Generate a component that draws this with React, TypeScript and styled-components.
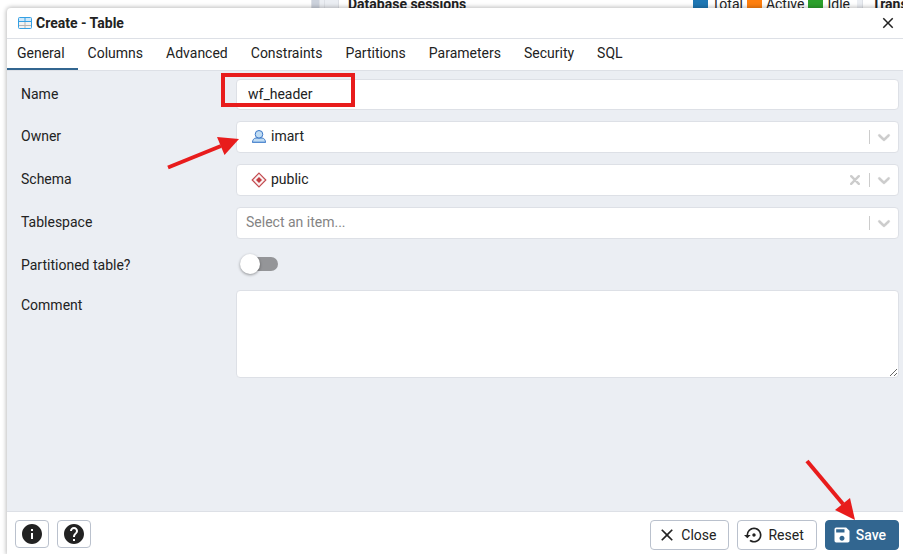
import React from 'react';
import styled, { createGlobalStyle } from 'styled-components';
import { MdClose, MdInfo, MdHelp, MdSettingsBackupRestore, MdSave } from 'react-icons/md';

const GlobalStyle = createGlobalStyle`
  *, *::before, *::after { box-sizing: border-box; }
  body {
    margin: 0;
    background: #fff;
    color: #222;
    font: 14px/20px Roboto, "Liberation Sans", sans-serif;
  }
  button, input, select, textarea { font: inherit; color: inherit; margin: 0; }
`;

const Page = styled.div`
  display: flex;
  flex-direction: column;
  min-height: 100vh;
  overflow: hidden;
`;

const Dashboard = styled.div`
  display: grid;
  grid-template-columns: 312px 8px 5px 14px 1fr 6px 40px;
  height: 8px;
`;

const Gutter = styled.div<{ $tone: string }>`
  background: ${(p) => p.$tone};
  border-right: 1px solid #dde0e6;
`;

const ChartTitle = styled.div`
  display: flex;
  align-items: flex-start;
  justify-content: space-between;
  height: 8px;
  padding-left: 9px;
  padding-right: 7px;
  line-height: 8px;
  font-weight: 700;
`;

const Legend = styled.div`
  display: flex;
  gap: 4px;
  font-weight: 400;
`;

const LegendItem = styled.span<{ $color: string }>`
  display: flex;
  gap: 4px;
  &::before {
    content: '';
    width: 15px;
    height: 8px;
    background: ${(p) => p.$color};
  }
`;

const Dialog = styled.section`
  flex: 1;
  display: flex;
  flex-direction: column;
  margin-left: 7px;
  background: #fff;
  border-top-left-radius: 4px;
  box-shadow: 0 0 4px 1px rgba(0, 0, 0, 0.26);
  position: relative;
`;

const TitleBar = styled.header`
  display: flex;
  align-items: center;
  height: 31px;
  padding: 0 6px 0 11px;
  gap: 4px;
  border-bottom: 1px solid #dde0e6;
`;

const Title = styled.h1`
  flex: 1;
  margin: 0;
  font-size: 14px;
  line-height: 20px;
  font-weight: 700;
`;

const CloseButton = styled.button`
  display: flex;
  padding: 0;
  border: 0;
  background: none;
  font-size: 18px;
`;

const TabList = styled.nav`
  display: flex;
  height: 32px;
  border-bottom: 1px solid #dde0e6;
`;

const Tab = styled.button<{ $active?: boolean }>`
  padding: 0 13px 2px 10px;
  border: 0;
  border-bottom: 2px solid ${(p) => (p.$active ? '#326690' : 'transparent')};
  background: none;
`;

const Form = styled.form`
  flex: 1;
  display: flex;
  flex-direction: column;
  gap: 11px;
  padding: 8px 4px 8px 8px;
  background: #ebeef3;
`;

const Row = styled.div`
  display: grid;
  grid-template-columns: 1fr 3fr;
`;

const Label = styled.label`
  padding: 5px 6px;
`;

const Control = styled.div`
  position: relative;
`;

const TextInput = styled.input`
  display: block;
  width: 100%;
  height: 31px;
  padding: 0 11px 2px;
  border: 1px solid #dde0e6;
  border-radius: 4px;
  background: #fff;
  outline: 0;
`;

const SelectBox = styled.div<{ $icon?: boolean }>`
  display: flex;
  align-items: center;
  height: 32px;
  padding-left: ${(p) => (p.$icon ? 14 : 9)}px;
  border: 1px solid #dde0e6;
  border-radius: 4px;
  background: #fff;
`;

const Select = styled.select<{ $empty?: boolean }>`
  flex: 1;
  height: 28px;
  padding: 0 0 2px ${(p) => (p.$empty ? 0 : 4)}px;
  border: 0;
  appearance: none;
  background: none;
  color: ${(p) => (p.$empty ? '#848484' : '#222')};
  outline: 0;
`;

const ClearButton = styled.button`
  display: flex;
  margin-right: 9px;
  padding: 0;
  border: 0;
  background: none;
`;

const Arrow = styled.span`
  display: flex;
  padding: 0 7px;
  border-left: 1px solid #ccc;
`;

const SwitchRow = styled(Row)`
  height: 29px;
`;

const Switch = styled.input`
  appearance: none;
  display: block;
  position: relative;
  width: 34px;
  height: 14px;
  margin: 7px 0 0 8px;
  border-radius: 7px;
  background: #949598;
  &::before {
    content: '';
    position: absolute;
    left: -4px;
    top: -3px;
    width: 20px;
    height: 20px;
    border-radius: 50%;
    background: #fff;
    box-shadow: 0 1px 3px rgba(0, 0, 0, 0.4);
  }
  &:checked::before { left: 18px; }
`;

const TextArea = styled.textarea`
  display: block;
  width: 100%;
  height: 88px;
  padding: 6px 11px;
  border: 1px solid #dde0e6;
  border-radius: 4px;
  background: #fff;
  outline: 0;
  resize: vertical;
`;

const Footer = styled.footer`
  display: flex;
  align-items: flex-start;
  gap: 8px;
  height: 43px;
  padding: 8px 4px 0 8px;
  border-top: 1px solid #dde0e6;
`;

const IconButton = styled.button`
  display: flex;
  align-items: center;
  justify-content: center;
  width: 34px;
  height: 28px;
  padding: 0;
  border: 1px solid #bac1cd;
  border-radius: 4px;
  background: #fff;
  font-size: 24px;
`;

const HelpButtons = styled.div`
  display: flex;
  flex: 1;
  gap: 8px;
`;

const ActionButton = styled.button<{ $primary?: boolean }>`
  display: flex;
  align-items: center;
  gap: 4px;
  position: relative;
  height: 30px;
  padding: 0 12px 1px 6px;
  border: 1px solid ${(p) => (p.$primary ? '#326690' : '#bac1cd')};
  border-radius: 4px;
  background: ${(p) => (p.$primary ? '#326690' : '#fff')};
  color: ${(p) => (p.$primary ? '#fff' : '#222')};
  font-weight: ${(p) => (p.$primary ? 500 : 400)};
  > svg { font-size: 20px; }
`;

const Highlight = styled.span`
  position: absolute;
  left: -15px;
  top: -6px;
  width: 134px;
  height: 34px;
  border: 4px solid #e81c1c;
  pointer-events: none;
`;

const OwnerPointer = styled.svg`
  position: absolute;
  left: -70px;
  top: 14px;
  width: 74px;
  height: 36px;
  pointer-events: none;
`;

const SavePointer = styled.svg`
  position: absolute;
  left: -22px;
  top: -63px;
  width: 54px;
  height: 64px;
  pointer-events: none;
`;

const TableIcon = () => (
  <svg width="14" height="14" viewBox="0 0 14 14" aria-hidden="true">
    <rect x="0.5" y="1.5" width="13" height="11" rx="1" fill="#f2f2f2" stroke="#34a0e4" />
    <path d="M1 2h12v3H1z" fill="#cfe8fa" />
    <path d="M1 9.5h12M7 6v6" stroke="#b5b5b5" />
    <path d="M1 5.5h12M7 2v4" stroke="#34a0e4" />
  </svg>
);

const UserIcon = () => (
  <svg width="16" height="16" viewBox="0 0 16 16" aria-hidden="true">
    <path d="M1.5 13.5c0-2.6 1.3-4.2 3.4-4.5h6.2c2.1.3 3.4 1.900 3.400 4.500z" fill="#c0dcf3" stroke="#3c78c8" />
    <circle cx="8" cy="5.300" r="3.800" fill="#c0dcf3" stroke="#3c78c8" />
    <path d="M2 13h12" stroke="#6fa0da" />
  </svg>
);

const SchemaIcon = () => (
  <svg width="16" height="16" viewBox="0 0 16 16" aria-hidden="true">
    <path d="M8 1.2 14.8 8 8 14.8 1.2 8z" fill="#faf1f1" stroke="#c34b50" strokeWidth="1.2" />
    <path d="M8 5 11 8 8 11 5 8z" fill="#c33b40" />
  </svg>
);

const Chevron = () => (
  <svg width="14" height="14" viewBox="3 3 14 14" fill="#ccc" stroke="#ccc" strokeWidth="0.3" aria-hidden="true">
    <path d="M4.516 7.548c0.436-0.446 1.043-0.481 1.576 0l3.908 3.747 3.908-3.747c0.533-0.481 1.141-0.446 1.574 0 0.436 0.445 0.408 1.197 0 1.615-0.406 0.418-4.695 4.502-4.695 4.502-0.217 0.223-0.502 0.335-0.787 0.335s-0.57-0.112-0.789-0.335c0 0-4.287-4.084-4.695-4.502s-0.436-1.17 0-1.615z" />
  </svg>
);

const ClearIcon = () => (
  <svg width="10" height="10" viewBox="0 0 10 10" aria-hidden="true">
    <path d="M1.2 1.2l7.6 7.6M8.8 1.2L1.2 8.8" stroke="#ccc" strokeWidth="2.4" strokeLinecap="round" />
  </svg>
);

const tabs = ['General', 'Columns', 'Advanced', 'Constraints', 'Partitions', 'Parameters', 'Security', 'SQL'];

export default function App() {
  return (
    <>
      <GlobalStyle />
      <Page>
        <Dashboard>
          <Gutter $tone="#fff" />
          <Gutter $tone="#ccd2dc" />
          <Gutter $tone="#ebeef3" />
          <Gutter $tone="#ebeef3" />
          <ChartTitle>
            Database sessions
            <Legend>
              <LegendItem $color="#1f77b4">Total</LegendItem>
              <LegendItem $color="#ff7f0e">Active</LegendItem>
              <LegendItem $color="#2ca02c">Idle</LegendItem>
            </Legend>
          </ChartTitle>
          <Gutter $tone="#ebeef3" />
          <ChartTitle>Transactions</ChartTitle>
        </Dashboard>
        <Dialog aria-labelledby="dialog-title">
          <TitleBar>
            <TableIcon />
            <Title id="dialog-title">Create - Table</Title>
            <CloseButton aria-label="Close dialog"><MdClose /></CloseButton>
          </TitleBar>
          <TabList role="tablist">
            {tabs.map((name, i) => (
              <Tab key={name} role="tab" aria-selected={i === 0} $active={i === 0}>{name}</Tab>
            ))}
          </TabList>
          <Form>
            <Row>
              <Label htmlFor="name">Name</Label>
              <Control>
                <TextInput id="name" defaultValue="wf_header" />
                <Highlight />
              </Control>
            </Row>
            <Row>
              <Label htmlFor="owner">Owner</Label>
              <Control>
                <SelectBox $icon>
                  <UserIcon />
                  <Select id="owner"><option>imart</option></Select>
                  <Arrow><Chevron /></Arrow>
                </SelectBox>
                <OwnerPointer viewBox="0 0 74 36" aria-hidden="true">
                  <path d="M2 32.5 55 11" stroke="#e81c1c" strokeWidth="4" />
                  <path d="M73 4 51 2 58.5 20z" fill="#e81c1c" />
                </OwnerPointer>
              </Control>
            </Row>
            <Row>
              <Label htmlFor="schema">Schema</Label>
              <Control>
                <SelectBox $icon>
                  <SchemaIcon />
                  <Select id="schema"><option>public</option></Select>
                  <ClearButton type="button" aria-label="Clear schema"><ClearIcon /></ClearButton>
                  <Arrow><Chevron /></Arrow>
                </SelectBox>
              </Control>
            </Row>
            <Row>
              <Label htmlFor="tablespace">Tablespace</Label>
              <Control>
                <SelectBox>
                  <Select id="tablespace" $empty><option>Select an item...</option></Select>
                  <Arrow><Chevron /></Arrow>
                </SelectBox>
              </Control>
            </Row>
            <SwitchRow>
              <Label htmlFor="partitioned">Partitioned table?</Label>
              <Control><Switch id="partitioned" type="checkbox" role="switch" /></Control>
            </SwitchRow>
            <Row>
              <Label htmlFor="comment">Comment</Label>
              <Control><TextArea id="comment" /></Control>
            </Row>
          </Form>
          <Footer>
            <HelpButtons>
              <IconButton aria-label="Information"><MdInfo /></IconButton>
              <IconButton aria-label="Help"><MdHelp /></IconButton>
            </HelpButtons>
            <ActionButton><MdClose />Close</ActionButton>
            <ActionButton><MdSettingsBackupRestore />Reset</ActionButton>
            <ActionButton $primary>
              <MdSave />Save
              <SavePointer viewBox="0 0 54 64" aria-hidden="true">
                <path d="M3 3 39 46" stroke="#e81c1c" strokeWidth="4" />
                <path d="M51 62 46 40 31 52z" fill="#e81c1c" />
              </SavePointer>
            </ActionButton>
          </Footer>
        </Dialog>
      </Page>
    </>
  );
}
